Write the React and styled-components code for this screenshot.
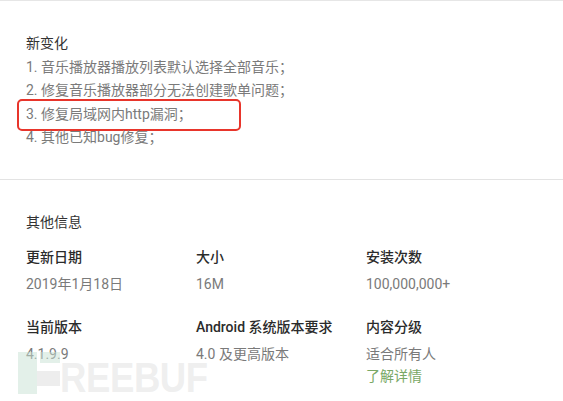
import React from "react";
import styled, { createGlobalStyle } from "styled-components";

const Global = createGlobalStyle`
  html, body { margin: 0; padding: 0; background: #fff; }
  body { font-family: Roboto, "Noto Sans CJK SC", sans-serif; overflow: hidden; }
`;

const Page = styled.div`
  position: relative;
  width: 563px;
  height: 401px;
  border-top: 1px solid #e6e6e6;
  box-sizing: border-box;
  overflow: hidden;
`;

const Section = styled.section`
  padding: ${(p) => p.$pad};
  border-bottom: ${(p) => (p.$divider ? "1px solid #e3e3e3" : "none")};
`;

const Heading = styled.h3`
  margin: 0;
  font-size: 14px;
  font-weight: 400;
  line-height: ${(p) => p.$lh || "23.5px"};
  color: #333;
`;

const List = styled.ol`
  list-style: none;
  margin: 0;
  padding: 0;
`;

const Item = styled.li`
  position: relative;
  font-size: 14px;
  line-height: 23.5px;
  color: #7a7a7a;
  white-space: nowrap;
`;

const Highlight = styled.span`
  position: absolute;
  left: -9px;
  top: -3.5px;
  width: 224px;
  height: 32px;
  border: 2px solid #e8352b;
  border-radius: 5px;
  box-sizing: border-box;
  pointer-events: none;
`;

const Grid = styled.div`
  display: grid;
  grid-template-columns: 170px 170px 170px;
  row-gap: 20px;
  margin-top: 11px;
`;

const Cell = styled.div`
  display: flex;
  flex-direction: column;
`;

const Label = styled.div`
  font-size: 14px;
  font-weight: 500;
  line-height: 24px;
  color: #2b2b2b;
  white-space: nowrap;
`;

const Value = styled.div`
  margin-top: ${(p) => p.$mt || "0"};
  font-size: 14px;
  line-height: 22px;
  color: ${(p) => (p.$link ? "#79a866" : "#7a7a7a")};
  white-space: nowrap;
`;

const Watermark = styled.div`
  position: absolute;
  left: 18px;
  top: 351px;
  display: flex;
  align-items: flex-end;
  pointer-events: none;
`;

const Logo = styled.svg`
  display: block;
  flex: none;
`;

const MarkText = styled.span`
  display: inline-block;
  font-family: "Liberation Sans", Arial, sans-serif;
  font-weight: 700;
  font-size: 43px;
  line-height: 31px;
  height: 32px;
  color: rgba(225, 225, 225, 0.55);
  transform: scaleX(0.85);
  transform-origin: left bottom;
  letter-spacing: -0.5px;
`;

const cells = [
  { label: "更新日期", values: ["2019年1月18日"] },
  { label: "大小", values: ["16M"] },
  { label: "安装次数", values: ["100,000,000+"] },
  { label: "当前版本", values: ["4.1.9.9"] },
  { label: "Android 系统版本要求", values: ["4.0 及更高版本"] },
  { label: "内容分级", values: ["适合所有人"], link: "了解详情" },
];

export default function App() {
  return (
    <>
      <Global />
      <Page>
        <Section $pad="31px 26px 29px" $divider>
          <Heading>新变化</Heading>
          <List>
            <Item>1. 音乐播放器播放列表默认选择全部音乐；</Item>
            <Item>2. 修复音乐播放器部分无法创建歌单问题；</Item>
            <Item>
              3. 修复局域网内http漏洞；
              <Highlight />
            </Item>
            <Item>4. 其他已知bug修复；</Item>
          </List>
        </Section>
        <Section $pad="30px 26px 0">
          <Heading $lh="24px">其他信息</Heading>
          <Grid>
            {cells.map((c) => (
              <Cell key={c.label}>
                <Label>{c.label}</Label>
                {c.values.map((v) => (
                  <Value key={v} $mt="4px">{v}</Value>
                ))}
                {c.link && <Value $link>{c.link}</Value>}
              </Cell>
            ))}
          </Grid>
        </Section>
        <Watermark>
          <Logo width="42" height="42" viewBox="0 0 42 42">
            <rect x="0" y="0" width="19" height="42" fill="rgba(200,225,212,0.5)" />
            <rect x="22" y="0" width="20" height="11" fill="rgba(200,225,212,0.5)" />
            <rect x="19" y="19" width="23" height="15" fill="rgba(215,215,215,0.45)" />
          </Logo>
          <MarkText>REEBUF</MarkText>
        </Watermark>
      </Page>
    </>
  );
}
